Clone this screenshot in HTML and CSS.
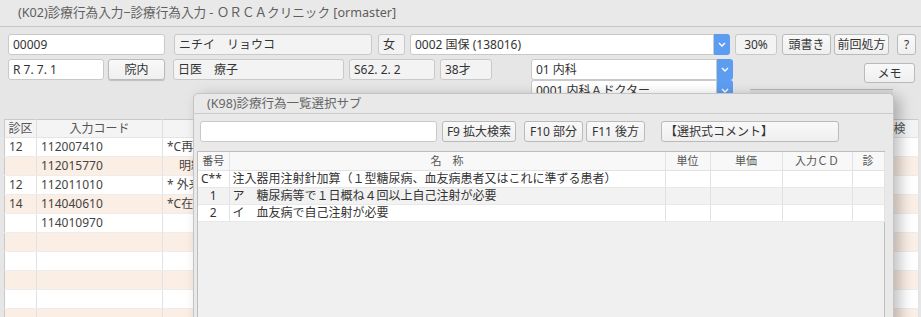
FILE: index.html
```html
<!DOCTYPE html>
<html lang="ja">
  <head>
    <meta charset="UTF-8" />
    <title>(K02)診療行為入力</title>
    <link rel="stylesheet" href="styles.css">
  </head>
  <body>
    <div class="titlebar">(K02)診療行為入力−診療行為入力 - ＯＲＣＡクリニック [ormaster]</div>

    <div class="row row1">
      <div class="field w-id">00009</div>
      <div class="field ro w-kana">ニチイ　リョウコ</div>
      <div class="field ro w-sex">女</div>
      <div class="select w-hoken">
        <div class="field">0002 国保 (138016)</div>
        <div class="arrow"><svg width="8" height="5" viewBox="0 0 8 5"><path d="M1 1 L4 4 L7 1" fill="none" stroke="#fff" stroke-width="1.4"/></svg></div>
      </div>
      <div class="field ro w-rate">30%</div>
      <div class="button w-head">頭書き</div>
      <div class="button w-prev">前回処方</div>
      <div class="button w-help">?</div>
    </div>

    <div class="row row2">
      <div class="field w-date">R 7. 7. 1</div>
      <div class="button raised w-in">院内</div>
      <div class="field ro w-name">日医　療子</div>
      <div class="field ro w-birth">S62. 2. 2</div>
      <div class="field ro w-age">38才</div>
      <div class="selects">
        <div class="select">
          <div class="field">01 内科</div>
          <div class="arrow"><svg width="8" height="5" viewBox="0 0 8 5"><path d="M1 1 L4 4 L7 1" fill="none" stroke="#fff" stroke-width="1.4"/></svg></div>
        </div>
        <div class="select">
          <div class="field">0001 内科Ａドクター</div>
          <div class="arrow"><svg width="8" height="5" viewBox="0 0 8 5"><path d="M1 1 L4 4 L7 1" fill="none" stroke="#fff" stroke-width="1.4"/></svg></div>
        </div>
      </div>
      <div class="side">
        <div class="button w-memo">メモ</div>
        <div class="side-box"></div>
      </div>
    </div>

    <table class="list">
      <colgroup>
        <col style="width: 32px" />
        <col style="width: 126px" />
        <col />
        <col style="width: 50px" />
      </colgroup>
      <thead>
        <tr><th>診区</th><th>入力コード</th><th></th><th>点検</th></tr>
      </thead>
      <tbody>
        <tr><td>12</td><td>112007410</td><td><span class="clip">*C再診料</span></td><td></td></tr>
        <tr><td></td><td>112015770</td><td><span class="clip">　明細書</span></td><td></td></tr>
        <tr><td>12</td><td>112011010</td><td><span class="clip">* 外来管</span></td><td></td></tr>
        <tr><td>14</td><td>114040610</td><td><span class="clip">*C在宅</span></td><td></td></tr>
        <tr><td></td><td>114010970</td><td></td><td></td></tr>
        <tr><td></td><td></td><td></td><td></td></tr>
        <tr><td></td><td></td><td></td><td></td></tr>
        <tr><td></td><td></td><td></td><td></td></tr>
        <tr><td></td><td></td><td></td><td></td></tr>
        <tr><td></td><td></td><td></td><td></td></tr>
      </tbody>
    </table>

    <div class="dialog">
      <div class="dialog-title">(K98)診療行為一覧選択サブ</div>
      <div class="toolbar">
        <div class="field w-search"></div>
        <div class="button w-f9">F9 拡大検索</div>
        <div class="button w-f10">F10 部分</div>
        <div class="button w-f11">F11 後方</div>
        <div class="button w-comment">【選択式コメント】</div>
      </div>
      <div class="picker">
        <table>
          <colgroup>
            <col style="width: 31px" />
            <col style="width: 436px" />
            <col style="width: 45px" />
            <col style="width: 72px" />
            <col style="width: 70px" />
            <col style="width: 32px" />
          </colgroup>
          <thead>
            <tr><th>番号</th><th>名　称</th><th>単位</th><th>単価</th><th>入力ＣＤ</th><th>診</th></tr>
          </thead>
          <tbody>
            <tr><td class="num left">C**</td><td>注入器用注射針加算（１型糖尿病、血友病患者又はこれに準ずる患者）</td><td></td><td></td><td></td><td></td></tr>
            <tr><td class="num">1</td><td>ア　糖尿病等で１日概ね４回以上自己注射が必要</td><td></td><td></td><td></td><td></td></tr>
            <tr><td class="num">2</td><td>イ　血友病で自己注射が必要</td><td></td><td></td><td></td><td></td></tr>
          </tbody>
        </table>
      </div>
    </div>
  </body>
</html>
```

FILE: styles.css
```css
html,
body {
  margin: 0;
  height: 317px;
  overflow: hidden;
}

body {
  position: relative;
  background: #e6e6e6;
  font-family: "Noto Sans", "Noto Sans CJK JP", sans-serif;
  font-size: 12px;
  color: #333;
}

.titlebar {
  height: 26px;
  line-height: 26px;
  padding-left: 18px;
  background: #e9e9e9;
  border-bottom: 1px solid #c6c6c6;
  color: #5e5e5e;
  font-size: 12.6px;
}

.row {
  display: flex;
  align-items: flex-start;
  padding-left: 8px;
}

.row1 {
  margin-top: 7px;
}

.row2 {
  margin-top: 4px;
}

.field {
  box-sizing: border-box;
  height: 21px;
  line-height: 19px;
  padding: 0 4px;
  border: 1px solid #c9c9c9;
  border-radius: 3px;
  background: #fff;
  white-space: nowrap;
  overflow: hidden;
}

.field.ro {
  background: #f3f3f3;
}

.button {
  box-sizing: border-box;
  height: 21px;
  line-height: 19px;
  border: 1px solid #bababa;
  border-radius: 3px;
  background: linear-gradient(#f9f9f9, #efefef);
  text-align: center;
  white-space: nowrap;
}

.button.raised {
  box-shadow: 0 1px 1px rgba(0, 0, 0, 0.18);
}

.select {
  display: flex;
}

.select .field {
  flex: 1;
  border-radius: 3px 0 0 3px;
}

.arrow {
  width: 16px;
  height: 21px;
  background: #5d9df1;
  border-radius: 0 3px 3px 0;
  display: flex;
  align-items: center;
  justify-content: center;
}

/* row 1 */
.w-id { width: 157px; }
.w-kana { width: 198px; margin-left: 9px; }
.w-sex { width: 27px; margin-left: 6px; }
.w-hoken { width: 320px; margin-left: 5px; }
.w-rate { width: 42px; margin-left: 5px; text-align: center; }
.w-head { width: 49px; margin-left: 5px; }
.w-prev { width: 55px; margin-left: 3px; }
.w-help { width: 19px; margin-left: 8px; }

/* row 2 */
.w-date { width: 96px; }
.w-in { width: 57px; margin-left: 4px; }
.w-name { width: 171px; margin-left: 8px; }
.w-birth { width: 86px; margin-left: 5px; }
.w-age { width: 52px; margin-left: 5px; }

.selects {
  width: 202px;
  margin-left: 39px;
}

.side {
  width: 165px;
  margin-left: 17px;
  display: flex;
  flex-direction: column;
  align-items: flex-end;
}

.w-memo {
  width: 51px;
  height: 20px;
  margin-top: 4px;
}

.side-box {
  align-self: flex-start;
  width: 143px;
  height: 12px;
  margin-top: 6px;
  background: #dcdcdc;
  border-top: 1px solid #b5b5b5;
  box-sizing: border-box;
}

/* main list behind the dialog */
.list {
  margin: 18px 0 0 4px;
  width: 915px;
  border-collapse: collapse;
  table-layout: fixed;
  background: #fff;
  border: 1px solid #c9c9c9;
}

.list th {
  height: 17px;
  padding: 0;
  line-height: 17px;
  font-weight: normal;
  color: #555;
  background: #f4f4f4;
  border-right: 1px solid #dedede;
  border-bottom: 1px solid #e4e4e4;
}

.list td {
  height: 18px;
  padding: 0 4px;
  line-height: 18px;
  color: #444;
  white-space: nowrap;
  overflow: hidden;
  border-right: 1px solid #e2e2e2;
  border-bottom: 1px solid #ececec;
}

.list tbody tr:nth-child(even) td {
  background: #fbeee5;
}

/* text runs on under the sub window */
.list .clip {
  display: block;
  width: 26px;
  overflow: hidden;
}

/* sub window */
.dialog {
  position: absolute;
  left: 193px;
  top: 93px;
  width: 701px;
  height: 240px;
  box-sizing: border-box;
  background: #e9e9e9;
  border: 1px solid #c4c4c4;
  border-radius: 5px 5px 0 0;
  box-shadow: 6px 3px 14px rgba(0, 0, 0, 0.25);
}

.dialog-title {
  height: 19px;
  line-height: 19px;
  padding-left: 13px;
  border-bottom: 1px solid #cbcbcb;
  color: #666;
  font-size: 12.5px;
}

.toolbar {
  display: flex;
  margin: 7px 0 0 6px;
}

.w-search { width: 237px; }
.w-f9 { width: 74px; margin-left: 5px; }
.w-f10 { width: 59px; margin-left: 8px; }
.w-f11 { width: 59px; margin-left: 3px; }
.w-comment { width: 178px; margin-left: 16px; text-align: left; padding-left: 3px; }

.picker {
  margin: 9px 0 0 3px;
  width: 688px;
  height: 200px;
  box-sizing: border-box;
  background: #f0f0f0;
  border: 1px solid #bdbdbd;
}

.picker table {
  width: 100%;
  border-collapse: collapse;
  table-layout: fixed;
}

.picker th {
  height: 18px;
  padding: 0;
  line-height: 18px;
  font-size: 11px;
  font-weight: normal;
  color: #555;
  background: #f8f8f8;
  border-right: 1px solid #e2e2e2;
  border-bottom: 1px solid #e2e2e2;
}

.picker td {
  height: 16px;
  padding: 0 3px;
  line-height: 16px;
  white-space: nowrap;
  overflow: hidden;
  background: #fff;
  color: #333;
  border-right: 1px solid #e2e2e2;
  border-bottom: 1px solid #e8e8e8;
}

.picker tbody tr:nth-child(even) td {
  background: #f2f2f2;
}

.picker td.num {
  text-align: center;
}

.picker td.left {
  text-align: left;
}
```
